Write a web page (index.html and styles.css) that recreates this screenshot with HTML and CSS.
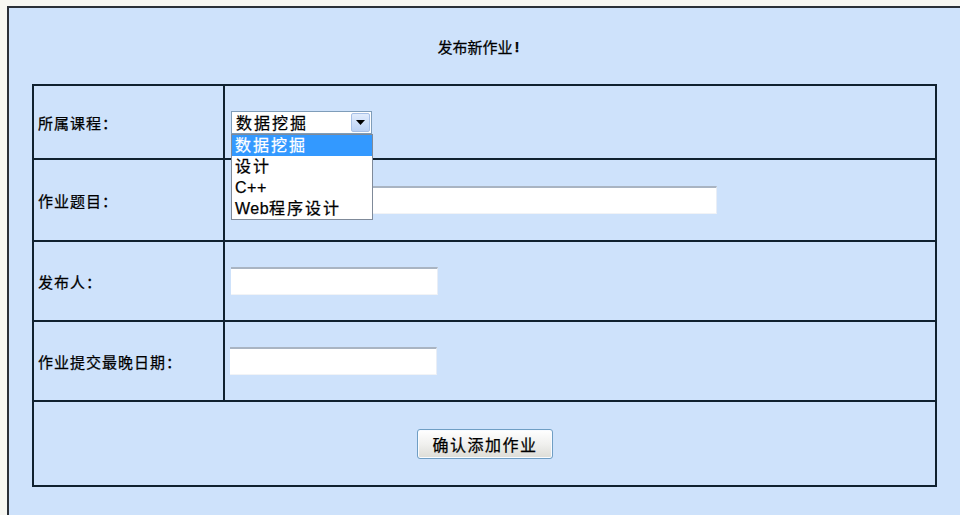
FILE: index.html
```html
<!DOCTYPE html>
<html lang="zh-CN">
<head>
<meta charset="utf-8">
<title>发布新作业</title>
<link rel="stylesheet" href="styles.css">
</head>
<body>
<div class="page">
  <div class="title">发布新作业<span class="bang">!</span></div>
  <div class="form-table">
    <div class="row row-1">
      <div class="label">所属课程：</div>
      <div class="value">
        <div class="select-wrap">
          <div class="select">
            <span class="select-text">数据挖掘</span>
            <span class="select-btn"><svg width="9" height="5" viewBox="0 0 9 5"><path d="M0 0H9L4.5 5Z" fill="#000"/></svg></span>
          </div>
          <ul class="options">
            <li class="opt selected">数据挖掘</li>
            <li class="opt">设计</li>
            <li class="opt"><span class="latin">C++</span></li>
            <li class="opt"><span class="latin">Web</span>程序设计</li>
          </ul>
        </div>
      </div>
    </div>
    <div class="row row-2">
      <div class="label">作业题目：</div>
      <div class="value"><input class="field field-wide" type="text"></div>
    </div>
    <div class="row row-3">
      <div class="label">发布人：</div>
      <div class="value"><input class="field field-short" type="text"></div>
    </div>
    <div class="row row-4">
      <div class="label">作业提交最晚日期：</div>
      <div class="value value-date"><input class="field field-short" type="text"></div>
    </div>
    <div class="row row-5">
      <button class="submit" type="button">确认添加作业</button>
    </div>
  </div>
</div>
</body>
</html>
```
FILE: styles.css
```css
html, body {
  margin: 0;
  padding: 0;
  background: #f7f7f2;
  overflow: hidden;
}
body {
  font-family: "Liberation Sans", "Noto Sans CJK SC", sans-serif;
  color: #000;
  -webkit-text-stroke: 0.25px #000;
}
.page {
  margin: 6px 0 0 7px;
  border-top: 2px solid #2b3038;
  border-left: 2px solid #2b3038;
  background: #cee2fb;
  min-height: 560px;
}
.title {
  height: 76px;
  display: flex;
  align-items: center;
  justify-content: center;
  font-size: 15px;
  padding-right: 12px;
}
.bang {
  font-weight: bold;
  padding-left: 2px;
}
.form-table {
  margin-left: 23px;
  width: 901px;
  border: 2px solid #10212f;
}
.row {
  display: grid;
  grid-template-columns: 191px 1fr;
  border-top: 2px solid #10212f;
}
.row-1 { border-top: 0; height: 72px; }
.row-2 { height: 80px; }
.row-3 { height: 78px; }
.row-4 { height: 78px; }
.row-5 {
  height: 83px;
  display: flex;
  align-items: center;
  justify-content: center;
}
.label {
  border-right: 2px solid #10212f;
  display: flex;
  align-items: center;
  padding-left: 4px;
  font-size: 15px;
  letter-spacing: 1px;
}
.value {
  display: flex;
  align-items: center;
  padding-left: 6px;
}
.value-date { padding-left: 5px; }
.select-wrap {
  position: relative;
  width: 141px;
}
.select {
  box-sizing: border-box;
  height: 23px;
  width: 141px;
  background: #fff;
  border: 1px solid #7f9db9;
  display: flex;
  align-items: center;
  justify-content: space-between;
  padding: 0 1px 0 4px;
  font-size: 16px;
  letter-spacing: 2px;
}
.select-btn {
  width: 19px;
  height: 19px;
  box-sizing: border-box;
  border: 1px solid #a7c0e6;
  border-radius: 2px;
  background: linear-gradient(#e1ecfd, #bcd2f4);
  display: flex;
  align-items: center;
  justify-content: center;
}
.options {
  position: absolute;
  left: 0;
  top: 23px;
  width: 142px;
  box-sizing: border-box;
  margin: 0;
  padding: 0;
  list-style: none;
  background: #fff;
  border: 1px solid #7f8a99;
  font-size: 16px;
  letter-spacing: 2px;
  z-index: 2;
}
.opt {
  height: 21px;
  line-height: 21px;
  padding-left: 3px;
  white-space: nowrap;
}
.latin {
  letter-spacing: 0.5px;
}
.opt.selected {
  background: #3399ff;
  color: #fff;
  -webkit-text-stroke: 0.25px #fff;
}
.field {
  box-sizing: border-box;
  height: 28px;
  background: #fff;
  border: 0;
  border-top: 2px solid #a9b4c2;
  border-right: 1px solid #e9eef6;
  border-bottom: 1px solid #f1f3f6;
  margin: 0;
  padding: 0 2px;
  outline: none;
}
.field-wide { width: 486px; }
.field-short { width: 207px; }
.submit {
  width: 136px;
  height: 30px;
  box-sizing: border-box;
  border: 1px solid #6f9ec4;
  border-radius: 3px;
  background: linear-gradient(#ffffff, #f0f0ee 50%, #dcdcd6);
  box-shadow: inset 0 0 0 1px #f8fbff;
  font-family: "Liberation Sans", "Noto Sans CJK SC", sans-serif;
  font-size: 16px;
  letter-spacing: 1.5px;
  color: #000;
  padding: 0 0 0 1px;
  -webkit-text-stroke: 0.25px #000;
}
```
